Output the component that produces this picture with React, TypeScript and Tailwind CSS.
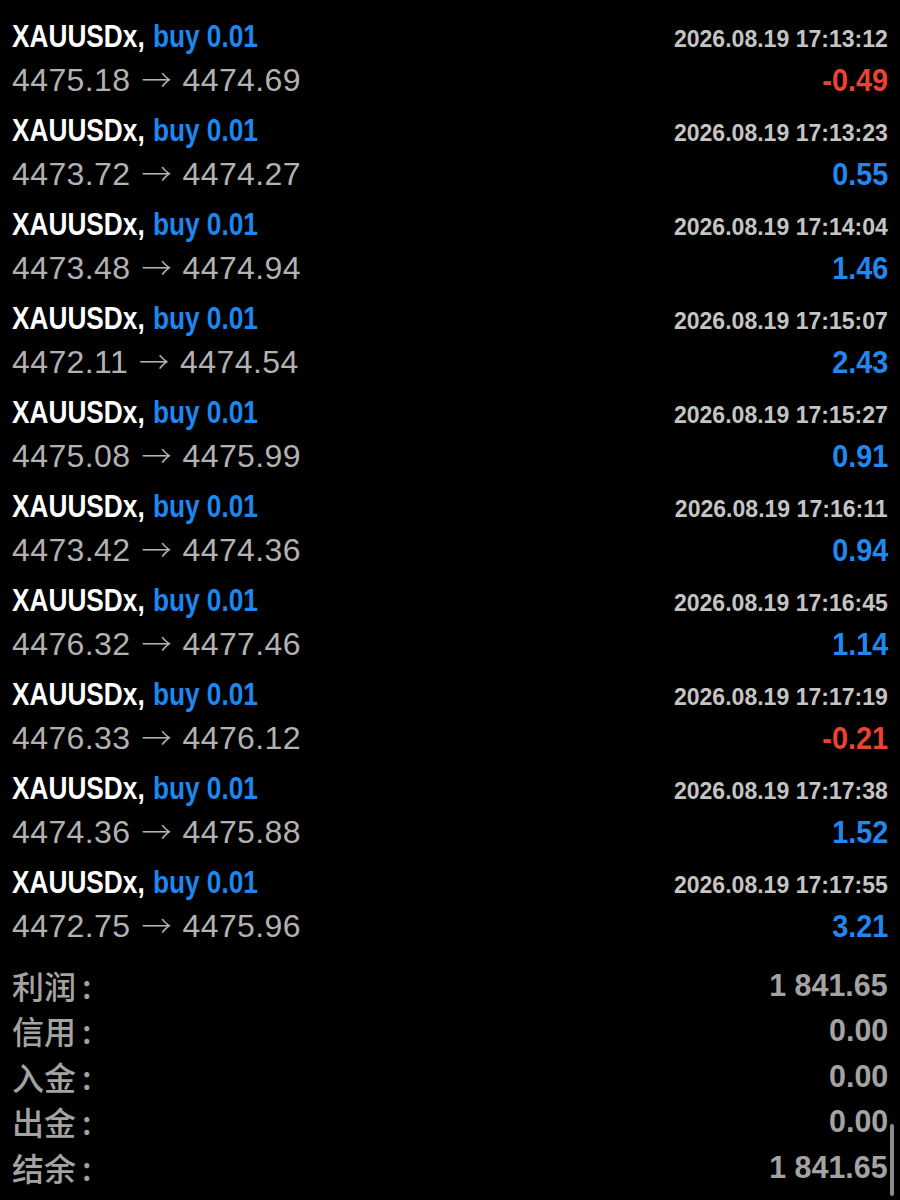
import React from 'react';

type Deal = { open: string; close: string; time: string; profit: string };

const deals: Deal[] = [
  { open: '4475.18', close: '4474.69', time: '2026.08.19 17:13:12', profit: '-0.49' },
  { open: '4473.72', close: '4474.27', time: '2026.08.19 17:13:23', profit: '0.55' },
  { open: '4473.48', close: '4474.94', time: '2026.08.19 17:14:04', profit: '1.46' },
  { open: '4472.11', close: '4474.54', time: '2026.08.19 17:15:07', profit: '2.43' },
  { open: '4475.08', close: '4475.99', time: '2026.08.19 17:15:27', profit: '0.91' },
  { open: '4473.42', close: '4474.36', time: '2026.08.19 17:16:11', profit: '0.94' },
  { open: '4476.32', close: '4477.46', time: '2026.08.19 17:16:45', profit: '1.14' },
  { open: '4476.33', close: '4476.12', time: '2026.08.19 17:17:19', profit: '-0.21' },
  { open: '4474.36', close: '4475.88', time: '2026.08.19 17:17:38', profit: '1.52' },
  { open: '4472.75', close: '4475.96', time: '2026.08.19 17:17:55', profit: '3.21' },
];

const summary = [
  { label: '利润', value: '1 841.65' },
  { label: '信用', value: '0.00' },
  { label: '入金', value: '0.00' },
  { label: '出金', value: '0.00' },
  { label: '结余', value: '1 841.65' },
];

const sans = "font-['Liberation_Sans',Arial,sans-serif]";

export default function App() {
  return (
    <div className="w-[900px] h-[1200px] bg-black overflow-hidden relative">
      <div className="pt-[12px] pl-[12px] pr-[12px] flex flex-col gap-[6px]">
        {deals.map((d, i) => (
          <div key={i} className="flex flex-col">
            <div className="h-[44px] flex items-baseline justify-between">
              <span className={`${sans} inline-block origin-left scale-x-[0.82] font-bold text-[32px] whitespace-nowrap`}>
                <span className="text-white">XAUUSDx,</span>
                <span className="text-[#1c87ef] ml-[10px]">buy 0.01</span>
              </span>
              <span className={`${sans} inline-block origin-right scale-x-[0.96] font-bold text-[24px] text-[#c4c4c4]`}>
                {d.time}
              </span>
            </div>
            <div className="h-[44px] flex items-baseline justify-between">
              <span className={`${sans} text-[32px] tracking-[0.4px] text-[#b2b2b2] whitespace-nowrap`}>
                {d.open}
                <span className="font-['Noto_Sans_CJK_SC',sans-serif] font-light text-[30px] mx-[11px] tracking-normal">→</span>
                {d.close}
              </span>
              <span
                className={`${sans} inline-block origin-right scale-x-[0.9] font-bold text-[32px] ${
                  d.profit.startsWith('-') ? 'text-[#ea4335]' : 'text-[#2088ef]'
                }`}
              >
                {d.profit}
              </span>
            </div>
          </div>
        ))}
      </div>
      <div className="pt-[16px] pl-[12px] pr-[12px] flex flex-col">
        {summary.map((s) => (
          <div key={s.label} className="h-[45.5px] flex items-center justify-between">
            <span className="font-['Noto_Sans_CJK_SC',sans-serif] font-medium text-[32px] text-[#a3a3a3] leading-none">
              {s.label}
              <span className="ml-[6px]">:</span>
            </span>
            <span className={`${sans} inline-block origin-right scale-x-[0.95] font-bold text-[32px] text-[#a3a3a3]`}>
              {s.value}
            </span>
          </div>
        ))}
      </div>
      <div className="absolute right-[6px] top-[1124px] w-[4px] h-[72px] rounded-full bg-[#8a8a8a]" />
    </div>
  );
}
